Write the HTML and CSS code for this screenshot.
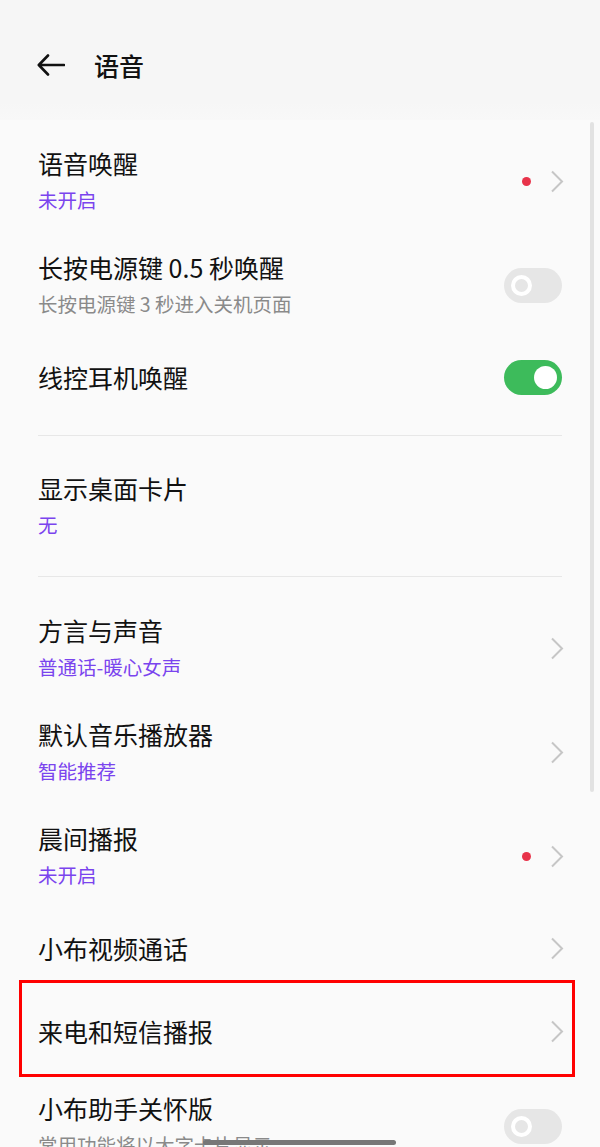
FILE: index.html
```html
<!DOCTYPE html>
<html>
	<head>
		<meta charset="UTF-8">
		<title>语音</title>
		<link rel="stylesheet" href="styles.css">
	</head>
	<body>
		<div id="page">
			<!--顶部标题栏-->
			<div class="header">
				<svg class="back" width="28" height="22" viewBox="0 0 28 22">
					<path d="M27 11H2M11 1.5L1.8 11l9.2 9.5" fill="none" stroke="#111" stroke-width="2.6" stroke-linecap="round" stroke-linejoin="round"/>
				</svg>
				<h1 class="title">语音</h1>
			</div>

			<div class="content">
				<div class="group">
					<div class="row two">
						<div class="text">
							<p class="name">语音唤醒</p>
							<p class="sub purple">未开启</p>
						</div>
						<span class="dot"></span>
						<svg class="arrow" width="14" height="23" viewBox="0 0 14 23"><path d="M2 1.5l10 10-10 10" fill="none" stroke="#c6c6c6" stroke-width="2"/></svg>
					</div>
					<div class="row two">
						<div class="text">
							<p class="name">长按电源键 0.5 秒唤醒</p>
							<p class="sub">长按电源键 3 秒进入关机页面</p>
						</div>
						<span class="switch"></span>
					</div>
					<div class="row">
						<div class="text">
							<p class="name">线控耳机唤醒</p>
						</div>
						<span class="switch on"></span>
					</div>
				</div>

				<div class="group">
					<div class="row two">
						<div class="text">
							<p class="name">显示桌面卡片</p>
							<p class="sub purple">无</p>
						</div>
					</div>
				</div>

				<div class="group last">
					<div class="row two">
						<div class="text">
							<p class="name">方言与声音</p>
							<p class="sub purple">普通话-暖心女声</p>
						</div>
						<svg class="arrow" width="14" height="23" viewBox="0 0 14 23"><path d="M2 1.5l10 10-10 10" fill="none" stroke="#c6c6c6" stroke-width="2"/></svg>
					</div>
					<div class="row two">
						<div class="text">
							<p class="name">默认音乐播放器</p>
							<p class="sub purple">智能推荐</p>
						</div>
						<svg class="arrow" width="14" height="23" viewBox="0 0 14 23"><path d="M2 1.5l10 10-10 10" fill="none" stroke="#c6c6c6" stroke-width="2"/></svg>
					</div>
					<div class="row two">
						<div class="text">
							<p class="name">晨间播报</p>
							<p class="sub purple">未开启</p>
						</div>
						<span class="dot"></span>
						<svg class="arrow" width="14" height="23" viewBox="0 0 14 23"><path d="M2 1.5l10 10-10 10" fill="none" stroke="#c6c6c6" stroke-width="2"/></svg>
					</div>
					<div class="row">
						<div class="text">
							<p class="name">小布视频通话</p>
						</div>
						<svg class="arrow" width="14" height="23" viewBox="0 0 14 23"><path d="M2 1.5l10 10-10 10" fill="none" stroke="#c6c6c6" stroke-width="2"/></svg>
					</div>
					<!--红框标注-->
					<div class="row marked">
						<div class="text">
							<p class="name">来电和短信播报</p>
						</div>
						<svg class="arrow" width="14" height="23" viewBox="0 0 14 23"><path d="M2 1.5l10 10-10 10" fill="none" stroke="#c6c6c6" stroke-width="2"/></svg>
					</div>
					<div class="row two">
						<div class="text">
							<p class="name">小布助手关怀版</p>
							<p class="sub">常用功能将以大字卡片显示</p>
						</div>
						<span class="switch"></span>
					</div>
				</div>
			</div>

			<span class="scrollbar"></span>
			<span class="homebar"></span>
		</div>
	</body>
</html>
```

FILE: styles.css
```css
*{
	margin: 0;
	padding: 0;
}

body{
	background-color: #fafafa;
	font-family: "Noto Sans CJK SC", "Noto Sans", sans-serif;
	color: #111;
}

#page{
	position: relative;
	width: 600px;
	height: 1147px;
	overflow: hidden;
}

.header{
	display: flex;
	align-items: center;
	height: 110px;
	padding: 10px 0 0 37px;
	background: linear-gradient(#f6f6f6 85%, #f8f8f8);
}

.header .back{
	display: block;
	margin-right: 29px;
}

.header .title{
	font-size: 25px;
	font-weight: 500;
	line-height: 30px;
}

.content{
	padding: 9px 38px 0;
}

.group{
	padding-bottom: 18px;
	margin-bottom: 18px;
	border-bottom: 1px solid #e7e7e7;
}

.group.last{
	padding-top: 1px;
	border-bottom: none;
}

.row{
	display: flex;
	align-items: center;
	height: 80px;
}

.row.two{
	height: 104px;
}

.row .text{
	flex: 1;
}

.row .name{
	font-size: 25px;
	line-height: 36px;
}

.row .sub{
	margin-top: 2px;
	font-size: 19.5px;
	line-height: 34px;
	color: #8a8a8a;
}

.row .sub.purple{
	color: #7a44ee;
}

.dot{
	width: 9px;
	height: 9px;
	margin-right: 19px;
	border-radius: 50%;
	background-color: #e8334a;
}

.arrow{
	display: block;
	margin-right: -2px;
}

.switch{
	position: relative;
	width: 58px;
	height: 35px;
	border-radius: 18px;
	background-color: #e6e6e6;
}

.switch:after{
	content: '';
	position: absolute;
	left: 7px;
	top: 7px;
	width: 13px;
	height: 13px;
	border: 4px solid #fff;
	border-radius: 50%;
	background-color: #e6e6e6;
}

.switch.on{
	background-color: #3dbb5b;
}

.switch.on:after{
	left: 30px;
	top: 6px;
	width: 23px;
	height: 23px;
	border: none;
	background-color: #fff;
}

.row.marked{
	position: relative;
	height: 86px;
}

.row.marked:after{
	content: '';
	position: absolute;
	left: -19px;
	right: -13px;
	top: -8px;
	bottom: -3px;
	border: 3px solid #f00;
}

.scrollbar{
	position: absolute;
	left: 590px;
	top: 122px;
	width: 4px;
	height: 670px;
	border-radius: 2px;
	background-color: #e2e2e2;
}

.homebar{
	position: absolute;
	left: 203px;
	top: 1140px;
	width: 193px;
	height: 5px;
	border-radius: 3px;
	background-color: #777;
}
```
